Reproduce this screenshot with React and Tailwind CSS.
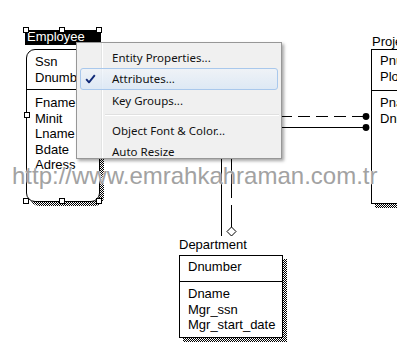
import React from "react";

const hatch =
  "bg-[repeating-conic-gradient(#000_0%_25%,#fff_0%_50%)] bg-[length:2px_2px]";

function Handle({ x, y }) {
  return (
    <div
      className="absolute w-[6px] h-[6px] bg-white border border-black"
      style={{ left: x - 3, top: y - 3 }}
    />
  );
}

function Lines({ items }) {
  return (
    <div className="flex flex-col">
      {items.map((t) => (
        <div key={t} className="leading-[15.5px] whitespace-nowrap">
          {t}
        </div>
      ))}
    </div>
  );
}

function MenuItem({ label, checked, highlighted }) {
  return (
    <div
      className={
        "h-[21.5px] mx-[3px] flex items-center rounded-[3px] border " +
        (highlighted
          ? "border-[#a9c8ec] bg-[linear-gradient(#eef4fb99,#d9e7f6cc)]"
          : "border-transparent")
      }
    >
      <span className="w-[31px] shrink-0 flex items-center">
        {checked && (
          <svg width="11" height="10" viewBox="0 0 11 10" className="ml-[4px]">
            <path
              d="M1.2 5.2 L4 8.3 L9.8 1.2"
              fill="none"
              stroke="#102a78"
              strokeWidth="1.9"
              strokeLinejoin="round"
            />
          </svg>
        )}
      </span>
      <span className="leading-[19.5px] whitespace-nowrap">{label}</span>
    </div>
  );
}

export default function App() {
  return (
    <div className="relative w-[397px] h-[353px] bg-white overflow-hidden font-['Liberation_Sans',Arial,sans-serif] text-[13px] text-black">
      {/* connectors */}
      <svg
        className="absolute left-0 top-0"
        width="397"
        height="353"
        viewBox="0 0 397 353"
      >
        <line x1="100" y1="116.5" x2="366" y2="116.5" stroke="#000" strokeWidth="1" strokeDasharray="12 6" />
        <line x1="100" y1="127.5" x2="366" y2="127.5" stroke="#000" strokeWidth="1" />
        <circle cx="366" cy="116.5" r="3.4" fill="#000" />
        <circle cx="366" cy="127.5" r="3.4" fill="#000" />
        <line x1="221.5" y1="130" x2="221.5" y2="236" stroke="#000" strokeWidth="1" />
        <line x1="231.5" y1="130" x2="231.5" y2="198" stroke="#000" strokeWidth="1" />
        <line x1="231.5" y1="205" x2="231.5" y2="227" stroke="#000" strokeWidth="1" />
        <polygon
          points="231.5,227 236,231.5 231.5,236 227,231.5"
          fill="#fff"
          stroke="#000"
          strokeWidth="1"
        />
      </svg>

      {/* Employee */}
      <div className="absolute left-[25px] top-[30px] h-[15px] w-[76px] bg-black text-white pl-[2px] leading-[15px]">
        <span className="relative top-[-1px]">Employee</span>
      </div>
      <div className={"absolute left-[30px] top-[53px] w-[74px] h-[153px] rounded-[9px] " + hatch} />
      <div className="absolute left-[26px] top-[49px] w-[74px] h-[153px] border border-black rounded-[9px] bg-white flex flex-col">
        <div className="h-[40px] pl-[8px] pt-[4px] border-b border-black">
          <Lines items={["Ssn", "Dnumber"]} />
        </div>
        <div className="pl-[8px] pt-[5px]">
          <Lines items={["Fname", "Minit", "Lname", "Bdate", "Adress"]} />
        </div>
      </div>
      <Handle x={26} y={30} />
      <Handle x={62} y={30} />
      <Handle x={99} y={30} />
      <Handle x={27} y={115} />
      <Handle x={26} y={201} />
      <Handle x={62} y={201} />
      <Handle x={99} y={201} />

      {/* Project */}
      <div className="absolute left-[372px] top-[34px] leading-[15px] whitespace-nowrap">
        Project
      </div>
      <div className={"absolute left-[375px] top-[53px] w-[60px] h-[155px] " + hatch} />
      <div className="absolute left-[371px] top-[49px] w-[60px] h-[155px] border border-black bg-white flex flex-col">
        <div className="h-[41px] pl-[8px] pt-[3px] border-b border-black">
          <Lines items={["Pnumber", "Plocation"]} />
        </div>
        <div className="pl-[8px] pt-[4px]">
          <Lines items={["Pname", "Dnum"]} />
        </div>
      </div>

      {/* Department */}
      <div className="absolute left-[179px] top-[237px] leading-[15px] whitespace-nowrap">
        Department
      </div>
      <div className={"absolute left-[183px] top-[259px] w-[104px] h-[83px] " + hatch} />
      <div className="absolute left-[179px] top-[255px] w-[104px] h-[83px] border border-black bg-white flex flex-col">
        <div className="h-[26px] pl-[8px] pt-[3px] border-b border-black">
          <Lines items={["Dnumber"]} />
        </div>
        <div className="pl-[8px] pt-[4px]">
          <Lines items={["Dname", "Mgr_ssn", "Mgr_start_date"]} />
        </div>
      </div>

      {/* context menu */}
      <div className="absolute left-[76px] top-[42px] w-[206px] h-[117px] border border-[#979797] bg-[#f0f0f0] overflow-hidden shadow-[2px_2px_3px_rgba(0,0,0,0.35)] pt-[3.5px] font-['Noto_Sans','Open_Sans',sans-serif] text-[11.5px] text-[#111]">
        <div className="absolute left-[24px] top-0 bottom-0 w-[2px] border-l border-[#e2e3e3] border-r border-r-white" />
        <div className="relative flex flex-col">
          <MenuItem label="Entity Properties..." />
          <MenuItem label="Attributes..." checked highlighted />
          <MenuItem label="Key Groups..." />
          <div className="h-[8.5px] flex flex-col justify-center pl-[28px] pr-[2px]">
            <div className="h-[2px] border-t border-[#e0e0e0] border-b border-b-white" />
          </div>
          <MenuItem label="Object Font & Color..." />
          <MenuItem label="Auto Resize" />
        </div>
      </div>

      {/* watermark */}
      <div className="absolute left-[12px] top-[164px] text-[24px] leading-[24px] whitespace-nowrap text-[#a2a2a2] [text-shadow:0_0_1px_#fff,0_0_1px_#fff,0_0_1px_#fff]">
        http://www.emrahkahraman.com.tr
      </div>
    </div>
  );
}
